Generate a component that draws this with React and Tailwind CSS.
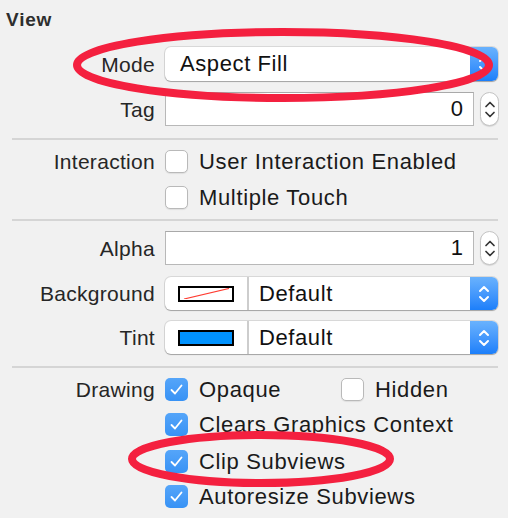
import React from "react";

const FONT = { fontFamily: '"Liberation Sans", Arial, sans-serif' };

function Chevrons({ color = "white", w = 12, h = 22, sw = 2 }) {
  return (
    <svg width={w} height={h} viewBox="0 0 12 22" fill="none">
      <path d="M2 8 L6 4 L10 8" stroke={color} strokeWidth={sw} strokeLinecap="round" strokeLinejoin="round" />
      <path d="M2 14 L6 18 L10 14" stroke={color} strokeWidth={sw} strokeLinecap="round" strokeLinejoin="round" />
    </svg>
  );
}

function BlueArrow() {
  return (
    <div className="w-[28px] h-full rounded-r-[6px] bg-linear-to-b from-[#69b2fd] to-[#1b7ffa] flex items-center justify-center">
      <Chevrons />
    </div>
  );
}

function Stepper() {
  return (
    <div className="ml-[6px] w-[19px] h-[34px] rounded-full bg-white border border-[#c4c4c4] shadow-[0_1px_1px_rgba(0,0,0,0.12)] flex items-center justify-center">
      <Chevrons color="#333333" w={12} h={27} sw={1.7} />
    </div>
  );
}

function Label({ children }) {
  return (
    <div className="w-[155px] shrink-0 text-right text-[21px] tracking-[0.3px] text-[#262626] leading-none">
      {children}
    </div>
  );
}

function CheckBox({ checked }) {
  if (checked) {
    return (
      <div className="w-[23px] h-[23px] shrink-0 rounded-[5px] bg-linear-to-b from-[#55a5f9] to-[#3792f5] flex items-center justify-center">
        <svg width="15" height="13" viewBox="0 0 15 13" fill="none">
          <path d="M2.5 7 L6 10.5 L12.5 2.5" stroke="white" strokeWidth="1.8" strokeLinecap="round" strokeLinejoin="round" />
        </svg>
      </div>
    );
  }
  return (
    <div className="w-[23px] h-[23px] shrink-0 rounded-[5px] bg-white border border-[#b9b9b9] shadow-[0_1px_1px_rgba(0,0,0,0.08)]" />
  );
}

function CheckItem({ checked, text }) {
  return (
    <div className="flex items-center">
      <CheckBox checked={checked} />
      <span className="ml-[11px] text-[22px] tracking-[0.65px] text-[#1a1a1a] leading-none">{text}</span>
    </div>
  );
}

function Separator({ mt }) {
  return <div className={`${mt} ml-[12px] w-[486px] h-[2px] bg-[#d5d5d5]`} />;
}

function TextField({ value }) {
  return (
    <div className="flex items-center">
      <div className="w-[309px] h-[34px] bg-white border border-[#b8b8b8] border-t-[#a9a9a9] flex items-center justify-end pr-[10px] text-[22px] text-[#111] leading-none">
        {value}
      </div>
      <Stepper />
    </div>
  );
}

function ColorPopup({ swatch }) {
  return (
    <div className="w-[333px] h-[33px] rounded-[6px] bg-white shadow-[0_0_0_1px_rgba(0,0,0,0.10),0_1px_1px_rgba(0,0,0,0.25)] flex">
      <div className="w-[82px] h-full flex items-center justify-center">
        {swatch === "clear" ? (
          <div className="relative w-[56px] h-[16px] border-[2.5px] border-black bg-white overflow-hidden">
            <svg className="absolute inset-0" width="51" height="11" viewBox="0 0 51 11">
              <line x1="4" y1="11" x2="49" y2="0.5" stroke="#ff3b30" strokeWidth="1.2" />
            </svg>
          </div>
        ) : (
          <div className="w-[56px] h-[16px] border-[2.5px] border-black bg-[#0092fe]" />
        )}
      </div>
      <div className="w-[2px] h-full bg-[#cdcdcd]" />
      <div className="flex-1 flex items-center pl-[10px] text-[22px] tracking-[0.6px] text-[#111] leading-none">Default</div>
      <BlueArrow />
    </div>
  );
}

export default function App() {
  return (
    <div className="relative w-[508px] h-[518px] bg-[#f1f1f1] overflow-hidden" style={FONT}>
      <div className="h-[40px] pl-[6px] pt-[10px] text-[19px] font-bold tracking-[0.8px] text-[#2e2e2e] leading-none">View</div>

      {/* Mode */}
      <div className="mt-[7px] h-[34px] flex items-center">
        <Label>Mode</Label>
        <div className="ml-[10px] w-[333px] h-[34px] rounded-[6px] bg-white shadow-[0_0_0_1px_rgba(0,0,0,0.10),0_1px_1px_rgba(0,0,0,0.25)] flex">
          <div className="flex-1 flex items-center pl-[15px] text-[22px] tracking-[0.6px] text-[#111] leading-none">Aspect Fill</div>
          <BlueArrow />
        </div>
      </div>

      {/* Tag */}
      <div className="mt-[11px] h-[34px] flex items-center">
        <Label>Tag</Label>
        <div className="ml-[10px]"><TextField value="0" /></div>
      </div>

      <Separator mt="mt-[12px]" />

      {/* Interaction */}
      <div className="mt-[10px] h-[23px] flex items-center">
        <Label>Interaction</Label>
        <div className="ml-[10px]"><CheckItem text="User Interaction Enabled" /></div>
      </div>
      <div className="mt-[13px] h-[23px] flex items-center">
        <div className="w-[155px] shrink-0" />
        <div className="ml-[10px]"><CheckItem text="Multiple Touch" /></div>
      </div>

      <Separator mt="mt-[10px]" />

      {/* Alpha */}
      <div className="mt-[10px] h-[34px] flex items-center">
        <Label>Alpha</Label>
        <div className="ml-[10px]"><TextField value="1" /></div>
      </div>

      {/* Background */}
      <div className="mt-[12px] h-[33px] flex items-center">
        <Label>Background</Label>
        <div className="ml-[10px]"><ColorPopup swatch="clear" /></div>
      </div>

      {/* Tint */}
      <div className="mt-[11px] h-[33px] flex items-center">
        <Label>Tint</Label>
        <div className="ml-[10px]"><ColorPopup swatch="blue" /></div>
      </div>

      <Separator mt="mt-[12px]" />

      {/* Drawing */}
      <div className="mt-[10px] h-[23px] flex items-center">
        <Label>Drawing</Label>
        <div className="ml-[10px] w-[176px]"><CheckItem checked text="Opaque" /></div>
        <CheckItem text="Hidden" />
      </div>
      <div className="mt-[12px] h-[23px] flex items-center">
        <div className="w-[155px] shrink-0" />
        <div className="ml-[10px]"><CheckItem checked text="Clears Graphics Context" /></div>
      </div>
      <div className="mt-[14px] h-[23px] flex items-center">
        <div className="w-[155px] shrink-0" />
        <div className="ml-[10px]"><CheckItem checked text="Clip Subviews" /></div>
      </div>
      <div className="mt-[12px] h-[23px] flex items-center">
        <div className="w-[155px] shrink-0" />
        <div className="ml-[10px]"><CheckItem checked text="Autoresize Subviews" /></div>
      </div>

      {/* Red annotation ellipses */}
      <svg className="absolute inset-0 pointer-events-none" width="508" height="518" viewBox="0 0 508 518">
        <ellipse cx="283" cy="65" rx="206" ry="33" fill="none" stroke="#f4203f" strokeWidth="8" />
        <ellipse cx="261" cy="459" rx="129" ry="24" fill="none" stroke="#f4203f" strokeWidth="8" />
      </svg>
    </div>
  );
}
